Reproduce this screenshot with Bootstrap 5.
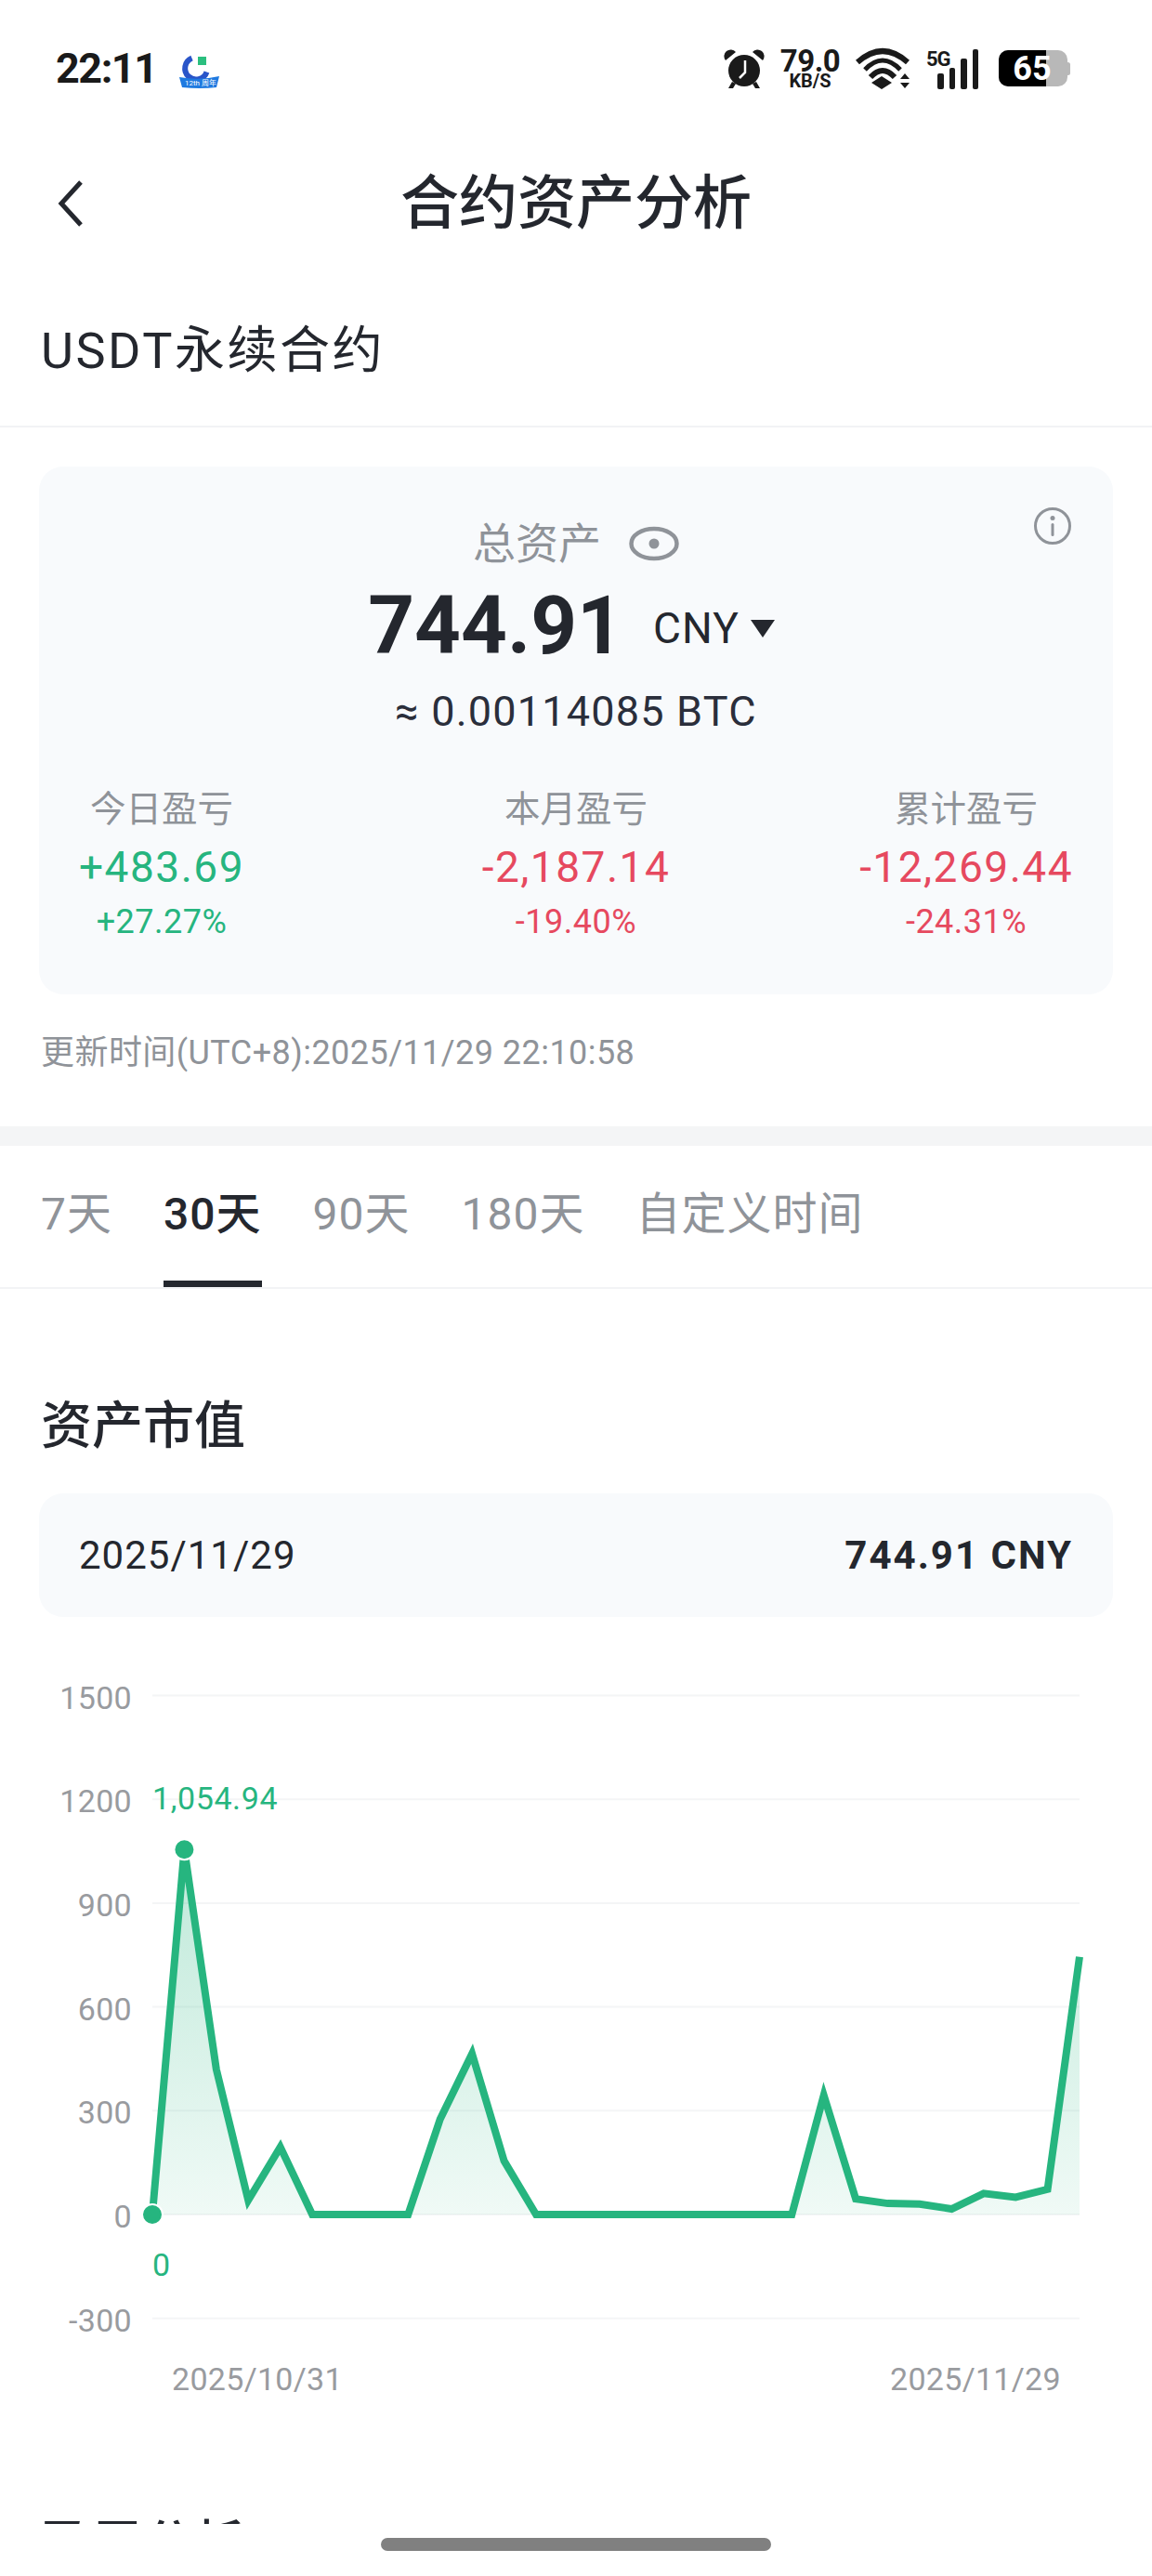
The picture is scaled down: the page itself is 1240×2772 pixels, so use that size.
<!DOCTYPE html>
<html lang="zh-CN">
<head>
  <meta charset="UTF-8">
  <meta name="viewport" content="width=device-width, initial-scale=1">
  <title>合约资产分析</title>
  <link href="https://cdn.jsdelivr.net/npm/bootstrap@5.3.3/dist/css/bootstrap.min.css" rel="stylesheet">

  <style>
    body {
      background-color: #fff;
      color: #24272e;
      font-family: Roboto, "Noto Sans CJK SC", sans-serif;
    }

    .page-clip {
      height: 2716px;
    }

    /* status bar */
    .status-bar {
      height: 148px;
      padding: 0 88px 0 60px;
    }

    .status-time {
      font-size: 45px;
      font-weight: 700;
      letter-spacing: -1.5px;
      color: #1a1a1a;
      margin-right: 24px;
    }

    .speed-text {
      width: 66px;
      color: #1a1a1a;
      font-weight: 700;
      text-align: center;
    }

    .speed-num {
      font-size: 33px;
      line-height: 27px;
      letter-spacing: -.5px;
    }

    .speed-unit {
      font-size: 20px;
      line-height: 17px;
    }

    /* title bar */
    .title-bar {
      height: 134px;
    }

    .back-btn {
      left: 60px;
      top: 45px;
    }

    .page-title {
      font-size: 63px;
      line-height: 142px;
      font-weight: 500;
      margin: 0;
    }

    .contract-title {
      height: 178px;
      padding: 61px 44px 0;
      font-size: 54px;
      line-height: 70px;
      font-weight: 400;
      letter-spacing: 2.5px;
      border-bottom: 2px solid #f2f3f5;
    }

    /* summary */
    .summary-card {
      margin: 42px 42px 0;
      height: 568px;
      padding: 55px 43px 0 43px;
      background-color: #f8fafc;
      border-radius: 26px;
    }

    .info-btn {
      right: 44px;
      top: 43px;
    }

    .total-label {
      height: 56px;
      font-size: 46px;
      line-height: 56px;
      color: #8f9399;
      gap: 30px;
    }

    .total-value {
      height: 100px;
      margin-top: 10px;
      line-height: 100px;
    }

    .total-num {
      font-size: 87px;
      font-weight: 700;
    }

    .total-unit {
      font-size: 46px;
      letter-spacing: 1px;
      margin: 6px 0 0 32px;
    }

    .total-caret {
      width: 0;
      height: 0;
      margin: 6px 10px 0 12px;
      border-left: 13px solid transparent;
      border-right: 13px solid transparent;
      border-top: 19px solid #24272e;
    }

    .total-btc {
      height: 60px;
      margin-top: 13px;
      font-size: 45px;
      line-height: 60px;
      letter-spacing: 1.2px;
      color: #2a2e3b;
    }

    .stat-grid {
      display: grid;
      grid-template-columns: 1fr auto 1fr;
      margin-top: 50px;
    }

    .stat-cell:first-child {
      justify-self: start;
    }

    .stat-cell:last-child {
      justify-self: end;
    }

    .stat-label {
      height: 50px;
      font-size: 38.5px;
      line-height: 50px;
      color: #8f9399;
    }

    .stat-value {
      height: 60px;
      margin-top: 7px;
      font-size: 46px;
      line-height: 60px;
      font-weight: 400;
      letter-spacing: 1.5px;
    }

    .stat-pct {
      height: 50px;
      margin-top: 4px;
      font-size: 36px;
      line-height: 50px;
      letter-spacing: .5px;
    }

    .up-color {
      color: #26b57f;
    }

    .down-color {
      color: #e6495f;
    }

    .update-line {
      height: 50px;
      margin-top: 38px;
      padding-left: 44px;
      font-size: 36px;
      line-height: 50px;
      letter-spacing: .45px;
      color: #8f9399;
    }

    .gray-band {
      height: 21px;
      margin-top: 54px;
      background-color: #f4f5f6;
    }

    /* range tabs */
    .range-tabs {
      height: 154px;
      padding-left: 44px;
      gap: 55px;
      border-bottom: 2px solid #f2f3f5;
    }

    .range-tab {
      height: 152px;
      padding-top: 48px;
      font-size: 48px;
      line-height: 52px;
      letter-spacing: 1px;
      color: #8f9399;
      border-bottom: 7px solid transparent;
    }

    .range-tab.is-active {
      color: #24272e;
      font-weight: 500;
      border-bottom-color: #24272e;
    }

    .block-title {
      height: 70px;
      padding-left: 44px;
      font-size: 55px;
      line-height: 70px;
      font-weight: 500;
    }

    .market-title {
      margin-top: 112px;
    }

    .date-box {
      height: 133px;
      margin: 38px 42px 0;
      padding: 0 43px;
      background-color: #f8fafc;
      border-radius: 26px;
      font-size: 42px;
      letter-spacing: 1px;
    }

    .date-amount {
      font-weight: 700;
      letter-spacing: 2px;
    }

    .chart-svg {
      display: block;
      margin-top: 60px;
    }

    .axis-text {
      font-family: Roboto, sans-serif;
      font-size: 34px;
      letter-spacing: .3px;
      fill: #999b9f;
    }

    .point-text {
      font-family: Roboto, sans-serif;
      font-size: 34px;
      letter-spacing: .6px;
      fill: #26b57f;
    }

    .pnl-title {
      margin-top: 103px;
    }

    .home-area {
      height: 56px;
    }

    .home-pill {
      width: 420px;
      height: 14px;
      margin-top: 15px;
      background-color: #808080;
      border-radius: 7px;
    }
  </style>
</head>
<body>

<div class="page-clip overflow-hidden">

  <!-- Status bar -->
  <div class="status-bar d-flex align-items-center">
    <span class="status-time">22:11</span>
    <svg width="46" height="44" viewBox="0 0 46 44">
      <path d="M14.500 10.500a12 12 0 1 0 16 15" fill="none" stroke="#2a55c9" stroke-width="6"/>
      <rect x="21" y="9" width="9" height="9" fill="#2bbf7f"/>
      <path d="M1 31q22 4 43-1l-3 12q-18 2-37 0z" fill="#1f7ae0"/>
      <text x="7" y="40" font-family="Roboto, sans-serif" font-size="8" fill="#fff">12th 周年</text>
    </svg>
    <div class="ms-auto d-flex align-items-center gap-3">
      <svg width="44" height="44" viewBox="0 0 44 44">
        <path d="M2 13a7 7 0 0 1 11-9zM42 13a7 7 0 0 0-11-9z" fill="#1a1a1a"/>
        <path d="M9 36l-4 7h5l3-5zM35 36l4 7h-5l-3-5z" fill="#1a1a1a"/>
        <circle cx="22" cy="24" r="17" fill="#1a1a1a"/>
        <path d="M23 13v13l-6 6" fill="none" stroke="#fff" stroke-width="2.500"/>
      </svg>
      <div class="speed-text">
        <div class="speed-num">79.0</div>
        <div class="speed-unit">KB/S</div>
      </div>
      <svg width="60" height="47" viewBox="0 0 60 47">
        <path d="M2 16Q29-8 56 16" fill="none" stroke="#1a1a1a" stroke-width="6"/>
        <path d="M16 32Q29 18 42 32" fill="none" stroke="#1a1a1a" stroke-width="6"/>
        <path d="M10 24Q29 4 48 24" fill="none" stroke="#1a1a1a" stroke-width="5"/>
        <path d="M17 38l11-7 11 7-11 7zM48 34l5-6 5 6zM48 38h10l-5 6z" fill="#1a1a1a"/>
      </svg>
      <svg width="58" height="44" viewBox="0 0 58 44">
        <text x="0" y="19" font-family="Roboto, sans-serif" font-weight="700" font-size="22" letter-spacing="-1" fill="#1a1a1a">5G</text>
        <g fill="#1a1a1a">
          <rect x="12" y="27" width="7" height="17" rx="2"/>
          <rect x="25" y="21" width="6" height="23" rx="2"/>
          <rect x="37" y="11" width="7" height="33" rx="2"/>
          <rect x="50" y="1" width="6" height="43" rx="2"/>
        </g>
      </svg>
      <svg class="ms-1" width="77" height="40" viewBox="0 0 77 40">
        <rect x="0" y="0" width="74" height="39" rx="10" fill="#b8b8b8"/>
        <rect x="72" y="13" width="5" height="14" rx="2.500" fill="#b8b8b8"/>
        <path d="M10 0H51V39H10A10 10 0 0 1 0 29V10A10 10 0 0 1 10 0z" fill="#000"/>
        <text x="36" y="32" text-anchor="middle" font-family="Roboto, sans-serif" font-weight="700" font-size="36" fill="#fff">65</text>
      </svg>
    </div>
  </div>

  <!-- Title -->
  <div class="title-bar position-relative text-center">
    <svg class="back-btn position-absolute" width="32" height="52" viewBox="0 0 32 52">
      <path d="M27 3L6 26l21 23" fill="none" stroke="#24272e" stroke-width="5"/>
    </svg>
    <h1 class="page-title">合约资产分析</h1>
  </div>

  <div class="contract-title">USDT永续合约</div>

  <!-- Total assets -->
  <div class="summary-card position-relative">
    <svg class="info-btn position-absolute" width="42" height="42" viewBox="0 0 42 42">
      <circle cx="21" cy="21" r="18.500" fill="none" stroke="#8f9399" stroke-width="3"/>
      <circle cx="21" cy="12.500" r="2.500" fill="#8f9399"/>
      <rect x="19.500" y="18" width="3" height="14" rx="1.500" fill="#8f9399"/>
    </svg>
    <div class="total-label d-flex justify-content-center align-items-center">
      <span>总资产</span>
      <svg width="54" height="38" viewBox="0 0 54 38">
        <ellipse cx="27" cy="19" rx="24.500" ry="16" fill="none" stroke="#8f9399" stroke-width="4.500"/>
        <circle cx="27" cy="19" r="5.500" fill="#8f9399"/>
      </svg>
    </div>
    <div class="total-value d-flex justify-content-center align-items-center">
      <span class="total-num">744.91</span>
      <span class="total-unit">CNY</span>
      <span class="total-caret"></span>
    </div>
    <div class="total-btc text-center">≈ 0.00114085 BTC</div>
    <div class="stat-grid">
      <div class="stat-cell text-center">
        <div class="stat-label">今日盈亏</div>
        <div class="stat-value up-color">+483.69</div>
        <div class="stat-pct up-color">+27.27%</div>
      </div>
      <div class="stat-cell text-center">
        <div class="stat-label">本月盈亏</div>
        <div class="stat-value down-color">-2,187.14</div>
        <div class="stat-pct down-color">-19.40%</div>
      </div>
      <div class="stat-cell text-center">
        <div class="stat-label">累计盈亏</div>
        <div class="stat-value down-color">-12,269.44</div>
        <div class="stat-pct down-color">-24.31%</div>
      </div>
    </div>
  </div>

  <div class="update-line">更新时间(UTC+8):2025/11/29 22:10:58</div>
  <div class="gray-band"></div>

  <!-- Range tabs -->
  <div class="range-tabs d-flex">
    <div class="range-tab">7天</div>
    <div class="range-tab is-active">30天</div>
    <div class="range-tab">90天</div>
    <div class="range-tab">180天</div>
    <div class="range-tab">自定义时间</div>
  </div>

  <!-- Market value -->
  <div class="block-title market-title">资产市值</div>
  <div class="date-box d-flex justify-content-between align-items-center">
    <span>2025/11/29</span>
    <span class="date-amount">744.91 CNY</span>
  </div>

  <svg class="chart-svg" id="marketChart" width="1240" height="800" viewBox="0 1800 1240 800">
    <defs>
      <linearGradient id="areaFill" gradientUnits="userSpaceOnUse" x1="0" y1="1990" x2="0" y2="2383">
        <stop offset="0" stop-color="#26b57f" stop-opacity=".3"/>
        <stop offset="1" stop-color="#26b57f" stop-opacity=".07"/>
      </linearGradient>
    </defs>
  </svg>

  <div class="block-title pnl-title">盈亏分析</div>
</div>

<div class="home-area d-flex justify-content-center">
  <div class="home-pill"></div>
</div>

<script>
  const chart = document.getElementById('marketChart');
  const values = [0, 1054.94, 420, 41, 195, 0, 0, 0, 0, 275, 465, 155, 0, 0, 0, 0, 0, 0, 0, 0, 0, 345, 45, 32, 30, 16, 61, 50, 73, 744.91];
  const ticks = [1500, 1200, 900, 600, 300, 0, -300];

  const xOf = i => 164 + i * (998 / 29);
  const yOf = v => 2383 - v * 0.3723;

  let markup = '';

  ticks.forEach(t => {
    const y = yOf(t);
    markup += `<line x1="164" x2="1162" y1="${y}" y2="${y}" stroke="#f4f5f6" stroke-width="2"/>`;
    markup += `<text class="axis-text" x="142" y="${y + 14}" text-anchor="end">${t}</text>`;
  });

  const points = values.map((v, i) => `${xOf(i).toFixed(1)},${yOf(v).toFixed(1)}`).join(' ');
  markup += `<polygon points="${points} 1162,2383 164,2383" fill="url(#areaFill)"/>`;
  markup += `<polyline points="${points}" fill="none" stroke="#26b57f" stroke-width="8" stroke-linejoin="miter"/>`;

  markup += `<circle cx="${xOf(1)}" cy="${yOf(values[1])}" r="11" fill="#26b57f" stroke="#fff" stroke-width="2"/>`;
  markup += `<circle cx="${xOf(0)}" cy="${yOf(0)}" r="11" fill="#26b57f" stroke="#fff" stroke-width="2"/>`;

  markup += '<text class="point-text" x="164" y="1947">1,054.94</text>';
  markup += '<text class="point-text" x="164" y="2449">0</text>';
  markup += '<text class="axis-text" x="185" y="2572">2025/10/31</text>';
  markup += '<text class="axis-text" x="958" y="2572">2025/11/29</text>';

  chart.insertAdjacentHTML('beforeend', markup);
</script>

<script src="https://cdn.jsdelivr.net/npm/bootstrap@5.3.3/dist/js/bootstrap.bundle.min.js"></script>
</body>
</html>
